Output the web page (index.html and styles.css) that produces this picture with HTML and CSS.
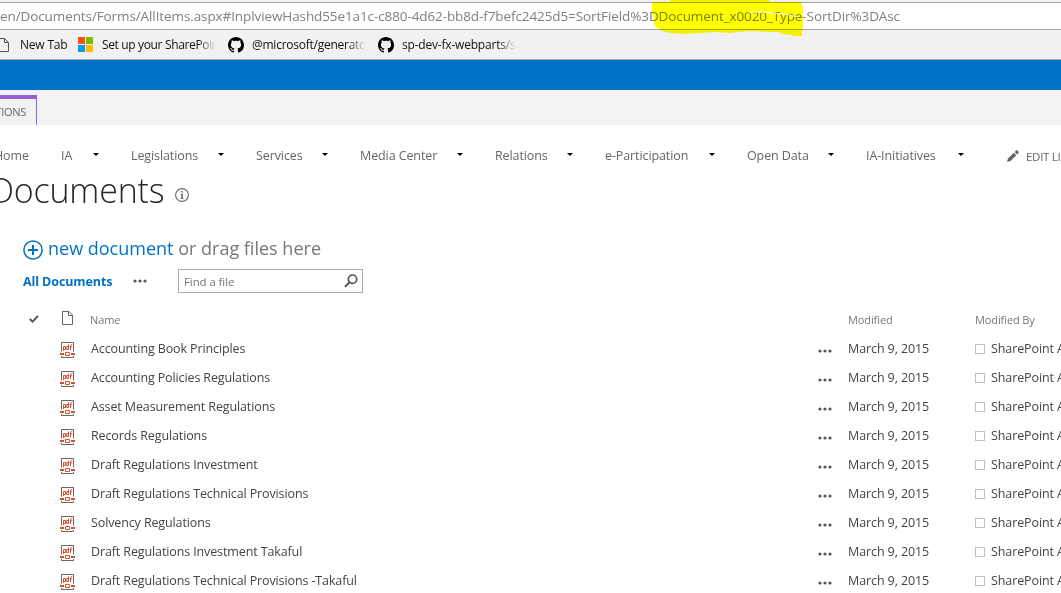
FILE: index.html
```html
<!DOCTYPE html>
<html lang="en">
<head>
<meta charset="utf-8">
<title>Documents</title>
<link rel="stylesheet" href="styles.css">
</head>
<body>
<svg class="defs" width="0" height="0" aria-hidden="true">
  <symbol id="github" viewBox="0 0 16 16"><path d="M8 0C3.58 0 0 3.58 0 8c0 3.54 2.29 6.53 5.47 7.59.4.07.55-.17.55-.38 0-.19-.01-.82-.01-1.49-2.01.37-2.53-.49-2.69-.94-.09-.23-.48-.94-.82-1.13-.28-.15-.68-.52-.01-.53.63-.01 1.08.58 1.23.82.72 1.21 1.87.87 2.33.66.07-.52.28-.87.51-1.07-1.78-.2-3.64-.89-3.64-3.95 0-.87.31-1.59.82-2.15-.08-.2-.36-1.02.08-2.12 0 0 .67-.21 2.2.82.64-.18 1.32-.27 2-.27s1.36.09 2 .27c1.53-1.04 2.2-.82 2.2-.82.44 1.1.16 1.92.08 2.12.51.56.82 1.27.82 2.15 0 3.07-1.87 3.75-3.65 3.95.29.25.54.73.54 1.48 0 1.07-.01 1.93-.01 2.2 0 .21.15.46.55.38A8.01 8.01 0 0 0 16 8c0-4.42-3.58-8-8-8z"/></symbol>
  <symbol id="pdf" viewBox="0 0 15 16">
    <path d="M1.500 9.500V.5h12V9.500M1.500 14v1.500h12V14" fill="none" stroke="#666"/>
    <path d="M0 11h4v2H0zM11 11h4v2h-4z" fill="#d9502e"/>
    <path d="M5.500 10.500h4v3h-4z" fill="#fff" stroke="#d9502e"/>
    <path d="M3.500 9V4.500H5.500V7.500H3.500M8.500 2.500V7.500H6.700V4.500H8.500M10.500 8V3.500Q10.500 2.600 12.300 2.600M9.700 4.800H12.300" fill="none" stroke="#d9502e"/>
  </symbol>
  <symbol id="dots" viewBox="0 0 14 4"><circle cx="2" cy="2" r="1.6"/><circle cx="7" cy="2" r="1.6"/><circle cx="12" cy="2" r="1.6"/></symbol>
</svg>

<header class="browser">
  <div class="address"><span class="url">en/Documents/Forms/AllItems.aspx#InplviewHashd55e1a1c-c880-4d62-bb8d-f7befc2425d5=SortField%3DDocument_x0020_Type-SortDir%3DAsc</span></div>
  <div class="bookmarks">
    <svg class="bm-page" width="9" height="14" viewBox="0 0 9 14"><path d="M0 .5H4.500L8.500 4.500V13.500H0M4.500 .5V4.500H8.500" fill="none" stroke="#555"/></svg>
    <span class="bm bm-tab">New Tab</span>
    <svg class="bm-ms" width="15" height="15" viewBox="0 0 15 15"><path fill="#f65314" d="M0 0h7v7H0z"/><path fill="#7cbb00" d="M8 0h7v7H8z"/><path fill="#00a1f1" d="M0 8h7v7H0z"/><path fill="#fb0" d="M8 8h7v7H8z"/></svg>
    <span class="bm bm-setup fade">Set up your SharePoin</span>
    <svg class="bm-gh" width="16" height="16"><use href="#github"/></svg>
    <span class="bm bm-gen fade">@microsoft/generato</span>
    <svg class="bm-gh" width="16" height="16"><use href="#github"/></svg>
    <span class="bm bm-web fade">sp-dev-fx-webparts/s</span>
  </div>
  <svg class="marker" width="160" height="40" viewBox="0 0 160 40"><path d="M21 0H119L120 2L151 2L153 8V30H152V36H143V35L133 34L128 32H118L105 31H98L80 33L65 32L35 34L22 33L15 32L7 28L4 24V17L2 13V2H19Z" fill="#ff0"/></svg>
  <svg class="erased" width="54" height="10" viewBox="0 0 54 10"><path d="M2 2L16 2L30 3L43 5L52 7" fill="none" stroke="#fff" stroke-width="1"/></svg>
</header>

<div class="suite"></div>
<div class="ribbon"><div class="tab"><span>ACTIONS</span></div></div>

<nav class="nav">
  <span class="n home">Home</span>
  <span class="n c-ia">IA</span><i class="caret"></i>
  <span class="n c-leg">Legislations</span><i class="caret"></i>
  <span class="n c-ser">Services</span><i class="caret"></i>
  <span class="n c-med">Media Center</span><i class="caret"></i>
  <span class="n c-rel">Relations</span><i class="caret"></i>
  <span class="n c-par">e-Participation</span><i class="caret"></i>
  <span class="n c-open">Open Data</span><i class="caret"></i>
  <span class="n c-ini">IA-Initiatives</span><i class="caret"></i>
  <svg class="pencil" width="12" height="12" viewBox="0 0 12 12"><path d="M0 12L1 8.500L6.800 2.700L9.300 5.200L3.500 11ZM7.600 1.900L9 .5Q10 -.3 11 .8T11.500 3L10.100 4.400Z" fill="#666"/></svg>
  <span class="edit">EDIT LINKS</span>
</nav>

<div class="heading">
  <h1>Documents</h1>
  <svg class="info" width="14" height="14" viewBox="0 0 14 14"><circle cx="7" cy="7" r="6.400" fill="none" stroke="#666" stroke-width="1.100"/><path d="M6.200 3h1.700v1.600H6.200zM5.500 5.700H7.900v4.200h.9v.9H5.300v-.9h.9v-3.300h-.7z" fill="#666"/></svg>
</div>

<main>
  <div class="new">
    <svg width="20" height="20" viewBox="0 0 20 20"><circle cx="10" cy="10" r="9.100" fill="none" stroke="#0072c6" stroke-width="1.500"/><path d="M10 5v10M5 10h10" stroke="#0072c6" stroke-width="2"/></svg>
    <p><a>new document</a> <span>or drag files here</span></p>
  </div>
  <div class="views">
    <b>All Documents</b>
    <svg class="dots"><use href="#dots"/></svg>
    <div class="search"><span>Find a file</span>
      <svg width="14" height="14" viewBox="0 0 14 14"><circle cx="8.500" cy="5.200" r="4.200" fill="none" stroke="#555" stroke-width="1.700"/><path d="M5.500 8.300L1 12.800" stroke="#555" stroke-width="2"/></svg>
    </div>
  </div>
  <div class="row head">
    <svg class="check" width="10" height="8" viewBox="0 0 10 8"><path d="M.8 4L3.600 6.600L9 .8" fill="none" stroke="#555" stroke-width="1.900"/></svg>
    <svg class="file" width="11" height="14" viewBox="0 0 11 14"><path d="M.5 .5H7L10.500 4V13.500H.5ZM6.500 .5V4.500H10.500" fill="none" stroke="#666"/></svg>
    <span class="hname">Name</span><span class="hmod">Modified</span><span class="hby">Modified By</span>
  </div>
  <div class="row"><svg class="pdf"><use href="#pdf"/></svg><span class="name">Accounting Book Principles</span><svg class="dots"><use href="#dots"/></svg><span class="date">March 9, 2015</span><i class="box"></i><span class="by">SharePoint Admin</span></div>
  <div class="row"><svg class="pdf"><use href="#pdf"/></svg><span class="name">Accounting Policies Regulations</span><svg class="dots"><use href="#dots"/></svg><span class="date">March 9, 2015</span><i class="box"></i><span class="by">SharePoint Admin</span></div>
  <div class="row"><svg class="pdf"><use href="#pdf"/></svg><span class="name">Asset Measurement Regulations</span><svg class="dots"><use href="#dots"/></svg><span class="date">March 9, 2015</span><i class="box"></i><span class="by">SharePoint Admin</span></div>
  <div class="row"><svg class="pdf"><use href="#pdf"/></svg><span class="name">Records Regulations</span><svg class="dots"><use href="#dots"/></svg><span class="date">March 9, 2015</span><i class="box"></i><span class="by">SharePoint Admin</span></div>
  <div class="row"><svg class="pdf"><use href="#pdf"/></svg><span class="name">Draft Regulations Investment</span><svg class="dots"><use href="#dots"/></svg><span class="date">March 9, 2015</span><i class="box"></i><span class="by">SharePoint Admin</span></div>
  <div class="row"><svg class="pdf"><use href="#pdf"/></svg><span class="name">Draft Regulations Technical Provisions</span><svg class="dots"><use href="#dots"/></svg><span class="date">March 9, 2015</span><i class="box"></i><span class="by">SharePoint Admin</span></div>
  <div class="row"><svg class="pdf"><use href="#pdf"/></svg><span class="name">Solvency Regulations</span><svg class="dots"><use href="#dots"/></svg><span class="date">March 9, 2015</span><i class="box"></i><span class="by">SharePoint Admin</span></div>
  <div class="row"><svg class="pdf"><use href="#pdf"/></svg><span class="name">Draft Regulations Investment Takaful</span><svg class="dots"><use href="#dots"/></svg><span class="date">March 9, 2015</span><i class="box"></i><span class="by">SharePoint Admin</span></div>
  <div class="row"><svg class="pdf"><use href="#pdf"/></svg><span class="name">Draft Regulations Technical Provisions -Takaful</span><svg class="dots"><use href="#dots"/></svg><span class="date">March 9, 2015</span><i class="box"></i><span class="by">SharePoint Admin</span></div>
</main>
</body>
</html>
```
FILE: styles.css
```css
* { box-sizing: border-box; }
body { margin: 0; width: 1061px; height: 593px; overflow: hidden; background: #fff; font-family: "Open Sans", "Noto Sans", sans-serif; color: #444; }
svg { display: block; flex: none; }
span, b, p, a { white-space: nowrap; flex: none; }
.defs { position: absolute; }

.browser { position: relative; height: 60px; padding-top: 2px; background: #f1f1f1; border-bottom: 1px solid #a9a9a9; }
.address { height: 28px; background: #fff; border: solid #a5a5a5; border-width: 1px 0; display: flex; align-items: center; overflow: hidden; }
.url { font-size: 13.5px; line-height: 26px; color: #808080; letter-spacing: -.1px; }
.bookmarks { height: 29px; display: flex; align-items: center; color: #111; overflow: hidden; }
.bm { font-size: 12px; line-height: 20px; letter-spacing: -.2px; }
.bm-tab { margin-left: 11px; width: 47px; }
.bm-ms { margin-left: 11px; }
.bm-setup { margin-left: 9px; width: 114px; letter-spacing: -.35px; }
.bm-gh { margin-left: 12px; }
.bm-gen { margin-left: 8px; width: 114px; letter-spacing: -.25px; }
.bm-web { margin-left: 8px; width: 114px; }
.fade { -webkit-mask-image: linear-gradient(90deg, #000 84%, transparent); mask-image: linear-gradient(90deg, #000 84%, transparent); }
.marker { position: absolute; left: 650px; top: 0; mix-blend-mode: multiply; }
.erased { position: absolute; left: 746px; top: 10px; }

.suite { height: 30px; background: #0072c6; }
.ribbon { height: 35px; background: #f2f2f2; padding-top: 5px; }
.tab { width: 37px; height: 30px; border-top: 4px solid #9360d6; border-right: 1px solid #9360d6; display: flex; justify-content: flex-end; padding-right: 10px; overflow: hidden; }
.tab span { font-size: 11px; line-height: 26px; color: #666; letter-spacing: -.3px; }

.nav { height: 46px; padding-top: 16px; display: flex; color: #666; overflow: hidden; }
.n { flex: none; font-size: 12.5px; line-height: 30px; letter-spacing: -.1px; }
.home { margin-left: -6px; width: 67px; }
.c-ia { width: 31px; }
.c-leg { width: 86px; }
.c-ser { width: 65px; }
.c-med { width: 96px; }
.c-rel { width: 71px; }
.c-par { width: 103px; }
.c-open { width: 80px; }
.c-ini { width: 91px; }
.caret { flex: none; margin: 12px 32px 0 1px; border: 3px solid transparent; border-top-color: #000; border-bottom: 0; height: 3px; width: 6px; }
.pencil { margin: 9px 7px 0 11px; }
.edit { font-size: 11.5px; line-height: 32px; letter-spacing: -.3px; }

.heading { height: 62px; display: flex; margin-left: -10px; }
h1 { margin: -4px 0 0; width: 185px; font-size: 34px; line-height: 46px; font-weight: 300; color: #262626; letter-spacing: -.2px; }
.info { margin-top: 17px; }

main { padding-left: 23px; }
.new { height: 36px; padding-top: 7px; display: flex; }
.new p { margin: -6px 0 0 5px; font-size: 18px; line-height: 28px; color: #777; }
.new a { color: #0072c6; }
.views { height: 24px; display: flex; align-items: center; font-size: 12.5px; }
.views b { width: 110px; color: #0072c6; letter-spacing: -.1px; }
.dots { width: 14px; height: 4px; fill: #555; }
.search { margin-left: 31px; width: 185px; height: 24px; border: 1px solid #ababab; display: flex; justify-content: space-between; align-items: center; padding: 0 4px 0 5px; color: #777; font-size: 11.5px; letter-spacing: -.1px; }

.row { height: 29px; display: flex; align-items: center; }
.row.head { height: 41px; padding-top: 11px; font-size: 11px; color: #777; letter-spacing: -.1px; }
.check { margin-left: 6px; }
.file { margin-left: 23px; margin-top: -2px; }
.hname { margin-left: 17px; width: 758px; }
.hmod { width: 127px; }
.pdf { align-self: flex-start; margin: 8px 0 0 37px; width: 15px; height: 16px; }
.name { margin-left: 16px; width: 727px; font-size: 12.5px; letter-spacing: -.12px; }
.row .dots { align-self: flex-start; margin-top: 14.5px; }
.date { margin-left: 16px; width: 127px; font-size: 12.5px; letter-spacing: -.1px; }
.box { flex: none; width: 10px; height: 10px; border: 1px solid #c0c0c0; }
.by { margin-left: 6px; font-size: 12.5px; letter-spacing: -.1px; }
```
